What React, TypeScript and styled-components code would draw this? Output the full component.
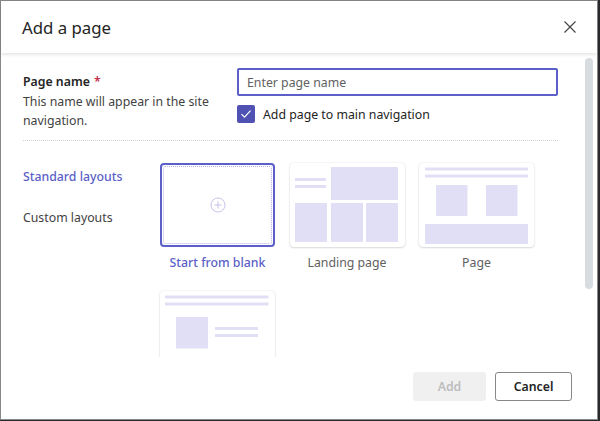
import React from "react";
import styled, { createGlobalStyle, css } from "styled-components";

const GlobalStyle = createGlobalStyle`
  html, body { margin: 0; padding: 0; background: #2a2a2e; }
  body { font-family: "Noto Sans", "Open Sans", sans-serif; }
  * { box-sizing: border-box; }
`;

const ACCENT = "#5b5fc7";
const BLOCK = "#e1dff6";
const FS = "12.3px";

const Dialog = styled.div`
  width: 598px;
  height: 420px;
  background: #fff;
  border: 1px solid #8a8886;
  display: flex;
  flex-direction: column;
  color: #242424;
`;

const Header = styled.div`
  height: 52px;
  flex: none;
  display: flex;
  align-items: center;
  justify-content: space-between;
  padding: 0 21px 0 21px;
  box-shadow: 0 1px 4px rgba(0, 0, 0, 0.14);
  position: relative;
  z-index: 1;
`;

const Title = styled.h1`
  margin: 0;
  font-size: 16.8px;
  font-weight: 400;
  color: #242424;
`;

const CloseButton = styled.button`
  border: 0;
  background: transparent;
  padding: 0;
  width: 12px;
  height: 12px;
  display: flex;
  align-items: center;
  justify-content: center;
`;

const Body = styled.div`
  flex: 1;
  min-height: 0;
  display: flex;
`;

const ScrollContent = styled.div`
  flex: 1;
  overflow: hidden;
  padding: 15px 27px 0 22px;
`;

const ScrollTrack = styled.div`
  width: 8px;
  flex: none;
  margin: 5px 4px 0 0;
`;

const ScrollThumb = styled.div`
  height: 231px;
  border-radius: 4px;
  background: #d6dcdf;
`;

const NameSection = styled.div`
  display: grid;
  grid-template-columns: 214px 1fr;
`;

const LabelCol = styled.div`
  padding-top: 4px;
`;

const FieldLabel = styled.div`
  font-size: ${FS};
  font-weight: 600;
  line-height: 20px;
  color: #242424;
`;

const Required = styled.span`
  color: #c4314b;
  margin-left: 4px;
`;

const Description = styled.p`
  margin: 0;
  font-size: ${FS};
  line-height: 19px;
  color: #424242;
`;

const InputCol = styled.div`
  display: flex;
  flex-direction: column;
`;

const TextInput = styled.input`
  height: 28px;
  width: 100%;
  border: 2px solid ${ACCENT};
  border-radius: 2px;
  padding: 0 8px;
  font-family: inherit;
  font-size: ${FS};
  color: #242424;
  outline: none;
  &::placeholder { color: #616161; }
`;

const CheckRow = styled.label`
  display: flex;
  align-items: center;
  gap: 8px;
  margin-top: 9px;
  font-size: ${FS};
  color: #242424;
`;

const CheckBox = styled.span`
  width: 18px;
  height: 18px;
  border-radius: 2px;
  background: #4f52b2;
  display: flex;
  align-items: center;
  justify-content: center;
`;

const Divider = styled.hr`
  margin: 10px 0 0;
  border: 0;
  border-top: 1px dotted #d1d1d1;
`;

const LayoutSection = styled.div`
  display: flex;
  padding-top: 15px;
`;

const Nav = styled.nav`
  width: 137px;
  flex: none;
  display: flex;
  flex-direction: column;
`;

const NavItem = styled.div<{ $active?: boolean }>`
  height: 41px;
  display: flex;
  align-items: center;
  font-size: ${FS};
  color: ${(p) => (p.$active ? ACCENT : "#424242")};
  font-weight: ${(p) => (p.$active ? 500 : 400)};
`;

const Grid = styled.div`
  padding-top: 7px;
  display: grid;
  grid-template-columns: repeat(3, 115px);
  column-gap: 14.5px;
  row-gap: 18px;
`;

const Tile = styled.div`
  display: flex;
  flex-direction: column;
  align-items: center;
`;

const Card = styled.div<{ $selected?: boolean }>`
  width: 115px;
  height: 84px;
  border-radius: 4px;
  background: #fff;
  position: relative;
  display: flex;
  align-items: center;
  justify-content: center;
  box-shadow: 0 0 2px rgba(0, 0, 0, 0.12), 0 1px 2px rgba(0, 0, 0, 0.12);
  ${(p) =>
    p.$selected &&
    css`
      border: 2px solid ${ACCENT};
      box-shadow: none;
      &::after {
        content: "";
        position: absolute;
        inset: 1px;
        border: 1px dotted #b4b5e4;
        border-radius: 2px;
      }
    `}
`;

const Thumb = styled.svg`
  display: block;
  width: 115px;
  height: 84px;
`;

const TileLabel = styled.div<{ $active?: boolean }>`
  margin-top: 6px;
  min-height: 20px;
  font-size: ${FS};
  line-height: 20px;
  color: ${(p) => (p.$active ? ACCENT : "#616161")};
  font-weight: ${(p) => (p.$active ? 500 : 400)};
`;

const Footer = styled.div`
  height: 62px;
  flex: none;
  display: flex;
  justify-content: flex-end;
  align-items: flex-start;
  gap: 9px;
  padding: 15px 25px 0 0;
`;

const Button = styled.button<{ $primary?: boolean }>`
  height: 29px;
  border-radius: 3px;
  font-family: inherit;
  font-size: ${FS};
  font-weight: 600;
  padding: 0;
  ${(p) =>
    p.$primary
      ? css`
          width: 73px;
          background: #f0f0f0;
          color: #bdbdbd;
          border: 1px solid #f0f0f0;
        `
      : css`
          width: 77px;
          background: #fff;
          color: #242424;
          border: 1px solid #8a8886;
        `}
`;

const Block = ({ x, y, w, h }: { x: number; y: number; w: number; h: number }) => (
  <rect x={x} y={y} width={w} height={h} fill={BLOCK} rx={0.5} />
);

const LandingThumb = () => (
  <Thumb viewBox="0 0 115 84">
    <Block x={5} y={15} w={31} h={3} />
    <Block x={5} y={22} w={31} h={3} />
    <Block x={41} y={4} w={67} h={33} />
    <Block x={5} y={40} w={32} h={39} />
    <Block x={41} y={40} w={32} h={39} />
    <Block x={76} y={40} w={32} h={39} />
  </Thumb>
);

const PageThumb = () => (
  <Thumb viewBox="0 0 115 84">
    <Block x={6} y={4.5} w={103} h={3} />
    <Block x={6} y={11.5} w={103} h={3} />
    <Block x={17} y={22} w={31.5} h={31} />
    <Block x={67} y={22} w={31.5} h={31} />
    <Block x={6} y={61} w={103} h={20} />
  </Thumb>
);

const ArticleThumb = () => (
  <Thumb viewBox="0 0 115 84">
    <Block x={5} y={4.5} w={103.5} h={3} />
    <Block x={5} y={11.5} w={103.5} h={3} />
    <Block x={16} y={26} w={32} h={31.5} />
    <Block x={55} y={36} w={43} h={3} />
    <Block x={55} y={43} w={43} h={3} />
  </Thumb>
);

const PlusIcon = () => (
  <svg width="16" height="16" viewBox="0 0 16 16" fill="none" stroke="#c5c3e8" strokeWidth="1">
    <circle cx="8" cy="8" r="7" />
    <path d="M8 4.5v7M4.5 8h7" />
  </svg>
);

export default function App() {
  return (
    <>
      <GlobalStyle />
      <Dialog>
        <Header>
          <Title>Add a page</Title>
          <CloseButton aria-label="Close">
            <svg width="12" height="12" viewBox="0 0 12 12" stroke="#424242" strokeWidth="1.1">
              <path d="M0.5 0.5l11 11M11.5 0.5l-11 11" />
            </svg>
          </CloseButton>
        </Header>
        <Body>
          <ScrollContent>
            <NameSection>
              <LabelCol>
                <FieldLabel>
                  Page name<Required>*</Required>
                </FieldLabel>
                <Description>
                  This name will appear in the site
                  <br />
                  navigation.
                </Description>
              </LabelCol>
              <InputCol>
                <TextInput placeholder="Enter page name" />
                <CheckRow>
                  <CheckBox>
                    <svg width="12" height="12" viewBox="0 0 12 12" fill="none" stroke="#fff" strokeWidth="1.2">
                      <path d="M1.5 6.2l3 3 6-6.5" />
                    </svg>
                  </CheckBox>
                  Add page to main navigation
                </CheckRow>
              </InputCol>
            </NameSection>
            <Divider />
            <LayoutSection>
              <Nav>
                <NavItem $active>Standard layouts</NavItem>
                <NavItem>Custom layouts</NavItem>
              </Nav>
              <Grid>
                <Tile>
                  <Card $selected>
                    <PlusIcon />
                  </Card>
                  <TileLabel $active>Start from blank</TileLabel>
                </Tile>
                <Tile>
                  <Card>
                    <LandingThumb />
                  </Card>
                  <TileLabel>Landing page</TileLabel>
                </Tile>
                <Tile>
                  <Card>
                    <PageThumb />
                  </Card>
                  <TileLabel>Page</TileLabel>
                </Tile>
                <Tile>
                  <Card>
                    <ArticleThumb />
                  </Card>
                  <TileLabel />
                </Tile>
              </Grid>
            </LayoutSection>
          </ScrollContent>
          <ScrollTrack>
            <ScrollThumb />
          </ScrollTrack>
        </Body>
        <Footer>
          <Button $primary disabled>
            Add
          </Button>
          <Button>Cancel</Button>
        </Footer>
      </Dialog>
    </>
  );
}
